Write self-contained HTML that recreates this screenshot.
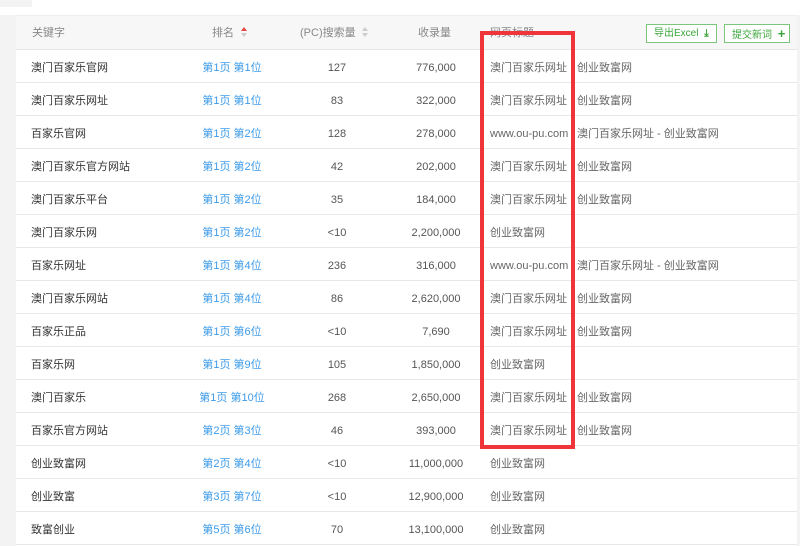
<!DOCTYPE html>
<html><head><meta charset="utf-8"><style>
*{margin:0;padding:0;box-sizing:border-box}
body{width:800px;height:546px;overflow:hidden;background:#fff;font-family:"Liberation Sans","Noto Sans CJK SC",sans-serif;font-size:11px;position:relative}
.lstrip{position:absolute;left:0;top:15px;width:16px;height:531px;background:#f3f3f3}
.rstrip{position:absolute;left:797px;top:15px;width:3px;height:531px;background:#f3f3f3}
.tbox{position:absolute;left:0;top:0;width:32px;height:7px;background:#f3f3f3}
.head{position:absolute;left:16px;top:15px;width:781px;height:35px;background:#f7f7f7;border-top:1px solid #eee;border-bottom:1px solid #e6e6e6;color:#888}
.row{position:absolute;left:16px;width:781px;height:33px;border-bottom:1px solid #e8e8e8}
.c{position:absolute;top:2px;line-height:32px;white-space:nowrap}
.k{left:15px;color:#333}
.r{left:172px;width:88px;text-align:center;color:#3d9be9}
.p{left:281px;width:80px;text-align:center;color:#555}
.s{left:380px;width:80px;text-align:center;color:#555}
.t1{left:474px;width:82px;overflow:hidden;color:#666}
.t2{left:561px;color:#666}
.head .c{line-height:34px;top:0}
.btn{position:absolute;top:24px;height:19px;border:1px solid #7cc57c;color:#3aa43a;font-size:10px;line-height:17px;padding-left:7px;background:#fff;white-space:nowrap}
.box{position:absolute;left:480px;top:31px;width:95px;height:418px;border:4px solid #f0353a}
.arr{position:absolute;width:0;height:0;border-left:3px solid transparent;border-right:3px solid transparent}
</style></head><body>
<div class="tbox"></div><div class="lstrip"></div><div class="rstrip"></div>
<div class="head">
<span class="c" style="left:16px">关键字</span>
<span class="c" style="left:196px">排名</span>
<span class="arr" style="left:225px;top:11px;border-bottom:4px solid #e84545"></span>
<span class="arr" style="left:225px;top:17px;border-top:4px solid #ccc"></span>
<span class="c" style="left:284px">(PC)搜索量</span>
<span class="arr" style="left:346px;top:11px;border-bottom:4px solid #ccc"></span>
<span class="arr" style="left:346px;top:17px;border-top:4px solid #ccc"></span>
<span class="c" style="left:402px">收录量</span>
<span class="c" style="left:474px">网页标题</span>
</div>
<div class="btn" style="left:646px;width:71px">导出Excel <b style="margin-left:3px">⤓</b></div>
<div class="btn" style="left:724px;width:66px">提交新词 <b style="margin-left:3px;font-size:13px">+</b></div>

<div class="row" style="top:50px"><span class="c k">澳门百家乐官网</span><span class="c r">第1页 第1位</span><span class="c p">127</span><span class="c s">776,000</span><span class="c t1">澳门百家乐网址</span><span class="c t2">创业致富网</span></div>
<div class="row" style="top:83px"><span class="c k">澳门百家乐网址</span><span class="c r">第1页 第1位</span><span class="c p">83</span><span class="c s">322,000</span><span class="c t1">澳门百家乐网址</span><span class="c t2">创业致富网</span></div>
<div class="row" style="top:116px"><span class="c k">百家乐官网</span><span class="c r">第1页 第2位</span><span class="c p">128</span><span class="c s">278,000</span><span class="c t1">www.ou-pu.com</span><span class="c t2">澳门百家乐网址 - 创业致富网</span></div>
<div class="row" style="top:149px"><span class="c k">澳门百家乐官方网站</span><span class="c r">第1页 第2位</span><span class="c p">42</span><span class="c s">202,000</span><span class="c t1">澳门百家乐网址</span><span class="c t2">创业致富网</span></div>
<div class="row" style="top:182px"><span class="c k">澳门百家乐平台</span><span class="c r">第1页 第2位</span><span class="c p">35</span><span class="c s">184,000</span><span class="c t1">澳门百家乐网址</span><span class="c t2">创业致富网</span></div>
<div class="row" style="top:215px"><span class="c k">澳门百家乐网</span><span class="c r">第1页 第2位</span><span class="c p">&lt;10</span><span class="c s">2,200,000</span><span class="c t1">创业致富网</span></div>
<div class="row" style="top:248px"><span class="c k">百家乐网址</span><span class="c r">第1页 第4位</span><span class="c p">236</span><span class="c s">316,000</span><span class="c t1">www.ou-pu.com</span><span class="c t2">澳门百家乐网址 - 创业致富网</span></div>
<div class="row" style="top:281px"><span class="c k">澳门百家乐网站</span><span class="c r">第1页 第4位</span><span class="c p">86</span><span class="c s">2,620,000</span><span class="c t1">澳门百家乐网址</span><span class="c t2">创业致富网</span></div>
<div class="row" style="top:314px"><span class="c k">百家乐正品</span><span class="c r">第1页 第6位</span><span class="c p">&lt;10</span><span class="c s">7,690</span><span class="c t1">澳门百家乐网址</span><span class="c t2">创业致富网</span></div>
<div class="row" style="top:347px"><span class="c k">百家乐网</span><span class="c r">第1页 第9位</span><span class="c p">105</span><span class="c s">1,850,000</span><span class="c t1">创业致富网</span></div>
<div class="row" style="top:380px"><span class="c k">澳门百家乐</span><span class="c r">第1页 第10位</span><span class="c p">268</span><span class="c s">2,650,000</span><span class="c t1">澳门百家乐网址</span><span class="c t2">创业致富网</span></div>
<div class="row" style="top:413px"><span class="c k">百家乐官方网站</span><span class="c r">第2页 第3位</span><span class="c p">46</span><span class="c s">393,000</span><span class="c t1">澳门百家乐网址</span><span class="c t2">创业致富网</span></div>
<div class="row" style="top:446px"><span class="c k">创业致富网</span><span class="c r">第2页 第4位</span><span class="c p">&lt;10</span><span class="c s">11,000,000</span><span class="c t1">创业致富网</span></div>
<div class="row" style="top:479px"><span class="c k">创业致富</span><span class="c r">第3页 第7位</span><span class="c p">&lt;10</span><span class="c s">12,900,000</span><span class="c t1">创业致富网</span></div>
<div class="row" style="top:512px"><span class="c k">致富创业</span><span class="c r">第5页 第6位</span><span class="c p">70</span><span class="c s">13,100,000</span><span class="c t1">创业致富网</span></div>

<div class="box"></div>
</body></html>
